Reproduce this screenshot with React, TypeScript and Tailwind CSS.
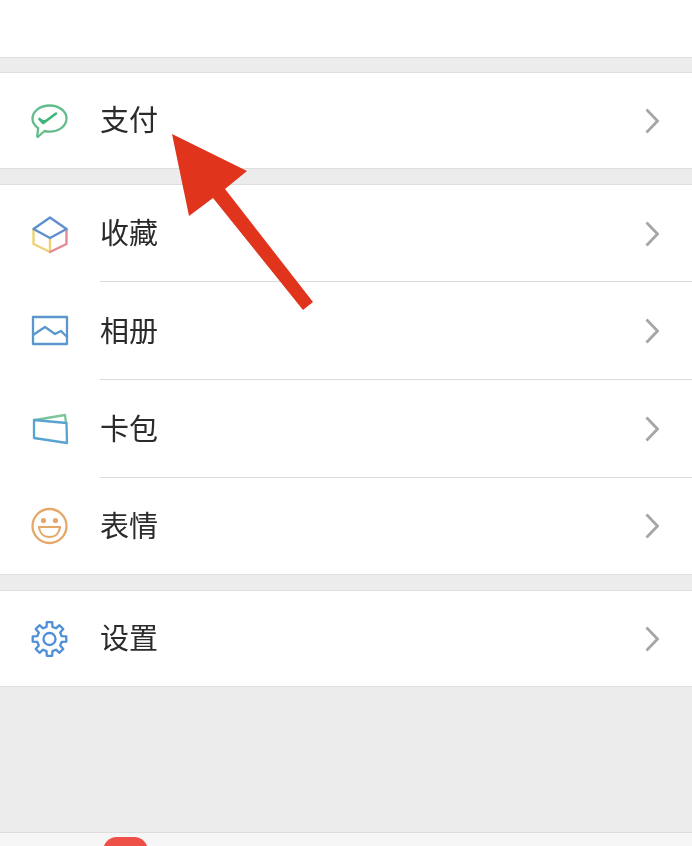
import * as React from 'react';

const WeChatPay = () => (
  <svg width="40" height="40" viewBox="0 0 40 40" fill="none" strokeLinecap="round" strokeLinejoin="round">
    <path d="M19.500 4.500C10 4.500 2.500 10.300 2.500 17.500c0 3.900 2.200 7.300 5.700 9.700l-1 7.600c-.1.900.5 1.200 1.100.7l6.200-5.500c1.900.4 3.500.6 5 .6 9.500 0 17-5.700 17-13.100S29 4.500 19.500 4.500z" stroke="#63bd8b" strokeWidth="2.300" />
    <path d="M9.500 18l3.800 4L26 12.500" stroke="#3fb57a" strokeWidth="2.600" />
    <path d="M9.500 17.500l4 1.500 5-.5-5 4.500z" fill="#3fb57a" />
  </svg>
);

const Cube = () => (
  <svg width="40" height="40" viewBox="0 0 40 40" fill="none" strokeWidth="2.400" strokeLinecap="round" strokeLinejoin="round">
    <path d="M3.500 15V30l16.500 8V24" stroke="#f0d275" />
    <path d="M36.500 15V30L20 38" stroke="#e58a92" />
    <path d="M3.500 15L20 3.500 36.500 15 20 24z" stroke="#5f8fcf" />
  </svg>
);

const Album = () => (
  <svg width="40" height="40" viewBox="0 0 40 40" fill="none" strokeWidth="2.300" strokeLinecap="round" strokeLinejoin="round">
    <rect x="3" y="6" width="34" height="27" stroke="#5b97cc" />
    <path d="M3 24l12-8 10 7 6-3 6 6" stroke="#5b97cc" />
  </svg>
);

const Wallet = () => (
  <svg width="40" height="40" viewBox="0 0 40 40" fill="none" strokeWidth="2.300" strokeLinecap="round" strokeLinejoin="round">
    <path d="M5 11L35 6l1 8" stroke="#7cc59a" />
    <path d="M4 11l32.500 3 .5 20-33-5z" stroke="#58a3cf" />
  </svg>
);

const Smile = () => (
  <svg width="40" height="40" viewBox="0 0 40 40" fill="none" strokeLinecap="round" strokeLinejoin="round">
    <circle cx="19.500" cy="20" r="17" stroke="#e4a868" strokeWidth="2.300" />
    <circle cx="13.500" cy="14.500" r="2.600" fill="#e4a868" />
    <circle cx="25.500" cy="14.500" r="2.600" fill="#e4a868" />
    <path d="M9 21h21c-.5 6-4.500 10-10.500 10S9.500 27 9 21z" stroke="#e4a868" strokeWidth="2.200" />
  </svg>
);

// eight rounded teeth, worked out once instead of typing out every point
const gearPoints = Array.from({ length: 8 }, (_, i) => {
  const a = (i * Math.PI) / 4 - Math.PI / 2;
  const pt = (r: number, d: number) =>
    `${(19.5 + r * Math.cos(a + d)).toFixed(2)},${(20 + r * Math.sin(a + d)).toFixed(2)}`;
  return [pt(12.5, -0.24), pt(17, -0.16), pt(17, 0.16), pt(12.5, 0.24)].join(' ');
}).join(' ');

const Gear = () => (
  <svg width="40" height="40" viewBox="0 0 40 40" fill="none" stroke="#4f8fd8" strokeWidth="2.300" strokeLinejoin="round">
    <polygon points={gearPoints} />
    <circle cx="19.500" cy="20" r="6" />
  </svg>
);

const Chevron = () => (
  <svg width="14" height="26" viewBox="0 0 14 26" fill="none" stroke="#a6a6a6" strokeWidth="2.800">
    <path d="M1.500 1.500L12.500 13 1.500 24.500" />
  </svg>
);

function Row({ icon, label, h, divider }: { icon: React.ReactNode; label: string; h: string; divider?: boolean }) {
  return (
    <div className={'relative flex items-center pl-[30px] pr-[33px] ' + h}>
      <div className="flex w-[40px] justify-center">{icon}</div>
      <span className="ml-[30px] flex-1 pb-[4px] text-[29px] leading-none text-[#2b2b2b]">{label}</span>
      <Chevron />
      {divider && <div className="absolute bottom-0 left-[100px] right-0 h-px bg-[#dcdcdc]" />}
    </div>
  );
}

export default function App() {
  return (
    <div className="relative flex h-[846px] w-[692px] flex-col overflow-hidden bg-white font-['Noto_Sans_CJK_SC','Noto_Sans',sans-serif]">
      <div className="flex flex-1 flex-col blur-[0.4px]">
        <div className="h-[57px]" />
        <div className="h-[16px] border-y border-[#dedede] bg-[#ececec]" />
        <Row h="h-[95px]" icon={<WeChatPay />} label="支付" />
        <div className="h-[17px] border-y border-[#dedede] bg-[#ececec]" />

        <div>
          <Row h="h-[97px]" icon={<Cube />} label="收藏" divider />
          <Row h="h-[98px]" icon={<Album />} label="相册" divider />
          <Row h="h-[98px]" icon={<Wallet />} label="卡包" divider />
          <Row h="h-[96px]" icon={<Smile />} label="表情" />
        </div>
        <div className="h-[17px] border-y border-[#dedede] bg-[#ececec]" />
        <Row h="h-[95px]" icon={<Gear />} label="设置" />

        {/* empty area + tab bar peeking in */}
        <div className="flex-1 border-t border-[#dedede] bg-[#ececec]" />
        <div className="relative h-[14px] overflow-hidden border-t border-[#dcdcdc] bg-[#f6f6f6]">
          <div className="absolute left-[103px] top-[4px] h-[30px] w-[45px] rounded-[14px] bg-[#ee4f46]" />
        </div>
      </div>

      {/* red arrow drawn over the list */}
      <svg className="absolute left-0 top-0" width="692" height="846" viewBox="0 0 692 846">
        <path d="M172 134L247 171 225 189 313 302 303 310 213 198 189 216z" fill="#e1341c" />
      </svg>
    </div>
  );
}
